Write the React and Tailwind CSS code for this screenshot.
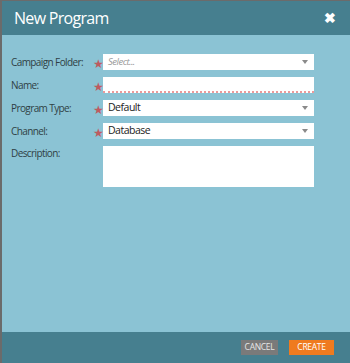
export default function App() {
  const Arrow = () => (
    <span className="ml-auto mr-[6px] h-0 w-0 border-x-[3.5px] border-t-[4px] border-x-transparent border-t-[#8a8a8a]" />
  );
  const Star = () => (
    <span className="w-[10px] text-[12px] leading-none text-[#bf5a60] pt-[4px]">★</span>
  );
  const rows = [
    { label: "Campaign Folder:", value: "Select...", placeholder: true, arrow: true },
    { label: "Name:", value: "", name: true },
    { label: "Program Type:", value: "Default", arrow: true },
    { label: "Channel:", value: "Database", arrow: true },
  ];
  return (
    <div
      className="w-[350px] h-[363px] flex flex-col bg-[#6b6b6b] pt-px pl-[2px]"
      style={{ fontFamily: "'Open Sans', 'Noto Sans', sans-serif" }}
    >
      <div className="h-[34px] bg-[#467f8f] flex items-center pl-[12px] pr-[14px] shrink-0">
        <span className="text-white text-[16px] leading-none tracking-[-0.7px]">New Program</span>
        <span className="ml-auto text-white text-[14px] font-bold leading-none">✖</span>
      </div>
      <div className="flex-1 bg-[#8bc3d4] pt-[19px] pl-[9px] flex flex-col gap-[7px]">
        {rows.map((r) => (
          <div key={r.label} className="flex items-center h-[16px]">
            <span className="w-[82px] text-[10px] tracking-[-0.6px] text-[#2f3f44]">{r.label}</span>
            <Star />
            <div
              className={
                "w-[211px] h-[16px] bg-white flex items-center pl-[5px] " +
                (r.name ? "border-b-2 border-dotted border-[#ec9a9a]" : "")
              }
            >
              <span
                className={
                  r.placeholder
                    ? "text-[9.5px] italic tracking-[-0.5px] text-[#999]"
                    : "text-[10.5px] tracking-[-0.5px] text-[#222]"
                }
              >
                {r.value}
              </span>
              {r.arrow && <Arrow />}
            </div>
          </div>
        ))}
        <div className="flex items-start">
          <span className="w-[92px] text-[10px] tracking-[-0.6px] text-[#2f3f44] leading-[14px]">Description:</span>
          <div className="w-[211px] h-[41px] bg-white" />
        </div>
      </div>
      <div className="h-[31px] bg-[#467f8f] flex items-center justify-end gap-[11px] pr-[16px] shrink-0">
        <button className="h-[15px] w-[37px] bg-[#7a7a7a] text-[#e6e6e6] text-[8.5px] tracking-[-0.3px] leading-none">CANCEL</button>
        <button className="h-[15px] w-[45px] bg-[#ef7b1f] text-white text-[8.5px] tracking-[-0.3px] leading-none">CREATE</button>
      </div>
    </div>
  );
}
